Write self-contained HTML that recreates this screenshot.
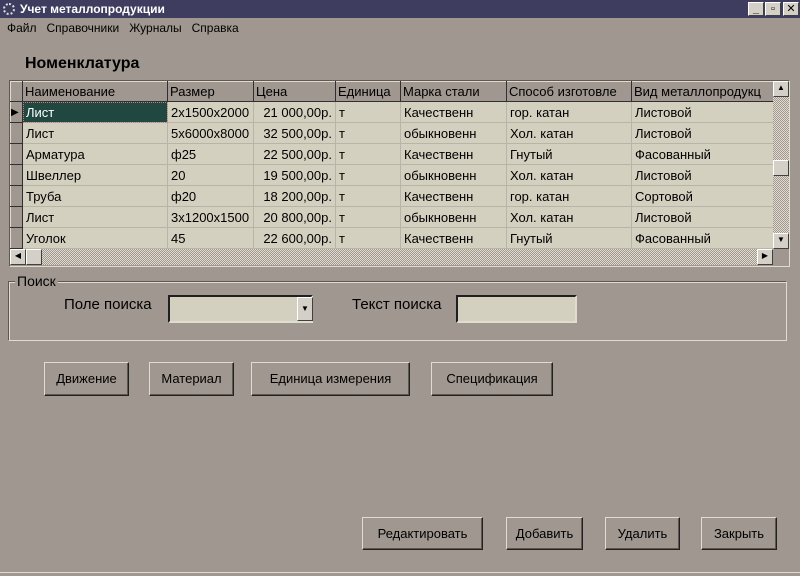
<!DOCTYPE html>
<html><head><meta charset="utf-8"><style>
*{margin:0;padding:0;box-sizing:border-box}
body{width:800px;height:576px;background:#a09890;font-family:"Liberation Sans","DejaVu Sans",sans-serif;font-size:13px;color:#000;position:relative;overflow:hidden}
.a{position:absolute}
.tb{left:0;top:0;width:800px;height:18px;background:#3f3d5f;color:#fff;font-weight:bold;font-size:12px;line-height:18px;padding-left:20px}
.wb{top:2px;width:16px;height:14px;background:#d4d0c8;border:1px solid;border-color:#fff #404040 #404040 #fff;font-size:11px;line-height:12px;text-align:center;color:#000;font-weight:bold}
.btn{background:#a09890;border:1px solid;border-color:#e0dcd0 #202020 #202020 #e0dcd0;box-shadow:inset -1px -1px 0 #605850;text-align:center;font-size:13px}
table{border-collapse:collapse;table-layout:fixed}
td{height:21px;border-right:1px solid #b8b4a8;border-bottom:1px solid #b8b4a8;background:#d4d0c0;padding:0 3px;white-space:nowrap;overflow:hidden;font-size:13px}
th{height:20px;background:#a09890;border:1px solid;border-color:#e0dcd0 #303030 #303030 #e0dcd0;font-weight:normal;text-align:left;padding:0 2px;white-space:nowrap;overflow:hidden;font-size:13px}
td.ind{background:#a09890;border:1px solid;border-color:#e0dcd0 #303030 #303030 #e0dcd0;padding:0}
.r{text-align:right}
.sc{background:repeating-conic-gradient(#e0dcd0 0 25%,#a09890 0 50%) 0 0/2px 2px}
</style></head><body>
<div class="a tb">Учет металлопродукции</div>
<div class="a" style="left:3px;top:3px;width:12px;height:12px;border-radius:50%;border:2px dotted #ddd"></div>
<div class="a wb" style="left:748px">_</div>
<div class="a wb" style="left:765px">▫</div>
<div class="a wb" style="left:783px;width:16px">✕</div>
<div class="a" style="left:7px;top:21px;font-size:12px;word-spacing:0">Файл&nbsp;&nbsp; Справочники&nbsp;&nbsp; Журналы&nbsp;&nbsp; Справка</div>
<div class="a" style="left:25px;top:55px;font-size:16px;font-weight:bold">Номенклатура</div>
<div class="a" style="left:9px;top:80px;width:781px;height:187px;border:1px solid;border-color:#605850 #e0dcd0 #e0dcd0 #605850;background:#a09890"></div>
<table class="a" style="left:10px;top:81px;width:764px">
<colgroup><col style="width:12px"><col style="width:145px"><col style="width:86px"><col style="width:82px"><col style="width:65px"><col style="width:106px"><col style="width:125px"><col style="width:143px"></colgroup>
<tr><th></th><th>Наименование</th><th>Размер</th><th>Цена</th><th>Единица</th><th>Марка стали</th><th>Способ изготовле</th><th>Вид металлопродукц</th></tr>
<tr><td class="ind" style="font-size:10px">▶</td><td style="background:#204840;color:#fff;outline:1px dotted #c08080;outline-offset:-1px">Лист</td><td>2x1500x2000</td><td class="r">21 000,00р.</td><td>т</td><td>Качественн</td><td>гор. катан</td><td>Листовой</td></tr>
<tr><td class="ind"></td><td>Лист</td><td>5x6000x8000</td><td class="r">32 500,00р.</td><td>т</td><td>обыкновенн</td><td>Хол. катан</td><td>Листовой</td></tr>
<tr><td class="ind"></td><td>Арматура</td><td>ф25</td><td class="r">22 500,00р.</td><td>т</td><td>Качественн</td><td>Гнутый</td><td>Фасованный</td></tr>
<tr><td class="ind"></td><td>Швеллер</td><td>20</td><td class="r">19 500,00р.</td><td>т</td><td>обыкновенн</td><td>Хол. катан</td><td>Листовой</td></tr>
<tr><td class="ind"></td><td>Труба</td><td>ф20</td><td class="r">18 200,00р.</td><td>т</td><td>Качественн</td><td>гор. катан</td><td>Сортовой</td></tr>
<tr><td class="ind"></td><td>Лист</td><td>3x1200x1500</td><td class="r">20 800,00р.</td><td>т</td><td>обыкновенн</td><td>Хол. катан</td><td>Листовой</td></tr>
<tr><td class="ind"></td><td>Уголок</td><td>45</td><td class="r">22 600,00р.</td><td>т</td><td>Качественн</td><td>Гнутый</td><td>Фасованный</td></tr>
</table>
<div class="a sc" style="left:773px;top:81px;width:16px;height:168px"></div>
<div class="a wb" style="left:773px;top:81px;height:16px;font-size:8px">▲</div>
<div class="a wb" style="left:773px;top:160px;height:16px"></div>
<div class="a wb" style="left:773px;top:233px;height:16px;font-size:8px">▼</div>
<div class="a sc" style="left:10px;top:249px;width:763px;height:16px"></div>
<div class="a wb" style="left:10px;top:249px;height:16px;font-size:8px">◀</div>
<div class="a wb" style="left:26px;top:249px;height:16px"></div>
<div class="a wb" style="left:757px;top:249px;height:16px;font-size:8px">▶</div>
<div class="a" style="left:8px;top:281px;width:779px;height:60px;border:1px solid;border-color:#605850 #e0dcd0 #e0dcd0 #605850;box-shadow:inset 1px 1px 0 #e0dcd0"></div>
<div class="a" style="left:15px;top:273px;background:#a09890;padding:0 2px;font-size:14px">Поиск</div>
<div class="a" style="left:64px;top:296px;font-size:15px">Поле поиска</div>
<div class="a" style="left:168px;top:295px;width:145px;height:28px;background:#d4d0c0;border:2px solid;border-color:#202020 #e0dcd0 #e0dcd0 #202020"></div>
<div class="a wb" style="left:297px;top:297px;height:24px;font-size:8px;line-height:22px">▼</div>
<div class="a" style="left:352px;top:296px;font-size:15px">Текст поиска</div>
<div class="a" style="left:456px;top:295px;width:121px;height:28px;background:#d4d0c0;border:2px solid;border-color:#202020 #e0dcd0 #e0dcd0 #202020"></div>
<div class="a btn" style="left:44px;top:362px;width:85px;height:34px;line-height:32px">Движение</div>
<div class="a btn" style="left:149px;top:362px;width:85px;height:34px;line-height:32px">Материал</div>
<div class="a btn" style="left:251px;top:362px;width:159px;height:34px;line-height:32px">Единица измерения</div>
<div class="a btn" style="left:431px;top:362px;width:122px;height:34px;line-height:32px">Спецификация</div>
<div class="a btn" style="left:362px;top:517px;width:121px;height:33px;line-height:31px">Редактировать</div>
<div class="a btn" style="left:506px;top:517px;width:77px;height:33px;line-height:31px">Добавить</div>
<div class="a btn" style="left:605px;top:517px;width:75px;height:33px;line-height:31px">Удалить</div>
<div class="a btn" style="left:701px;top:517px;width:76px;height:33px;line-height:31px">Закрыть</div>
<div class="a" style="left:0;top:572px;width:800px;height:1px;background:#e0dcd0"></div>
</body></html>
